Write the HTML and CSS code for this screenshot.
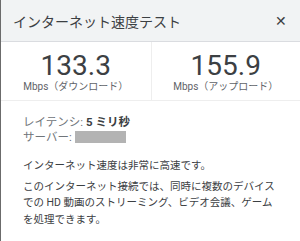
FILE: index.html
```html
<!DOCTYPE html>
<html lang="ja">
<head>
    <meta charset="UTF-8">
    <title>インターネット速度テスト</title>
    <link rel="stylesheet" href="styles.css">
</head>
<body>
    <div class="panel">
        <div class="header">
            <span class="title">インターネット速度テスト</span>
            <span class="close">&#x2715;</span>
        </div>

        <div class="stats">
            <div class="stat">
                <div class="value">133.3</div>
                <div class="unit">Mbps（ダウンロード）</div>
            </div>
            <div class="stat">
                <div class="value">155.9</div>
                <div class="unit">Mbps（アップロード）</div>
            </div>
        </div>

        <div class="details">
            <div class="meta">
                <div>レイテンシ: <b>5 ミリ秒</b></div>
                <div>サーバー: <span class="hidden-box"></span></div>
            </div>
            <p>インターネット速度は非常に高速です。</p>
            <p>このインターネット接続では、同時に複数のデバイスでの HD 動画のストリーミング、ビデオ会議、ゲームを処理できます。</p>
        </div>
    </div>
</body>
</html>
```

FILE: styles.css
```css
body {
    margin: 0;
    font-family: Roboto, "Noto Sans CJK JP", sans-serif;
    background-color: white;
    color: #3c4043;
}

.panel {
    border-left: 1px solid #6b6b6b;
    height: 241px;
    box-sizing: border-box;
}

.header {
    display: flex;
    justify-content: space-between;
    align-items: center;
    height: 42px;
    padding: 0 13px 0 12px;
    background-color: #f1f3f4;
    border-bottom: 1px solid #dadce0;
    box-sizing: border-box;
}

.title {
    font-size: 14px;
    color: #3c4043;
}

.close {
    font-size: 14px;
    font-weight: 300;
    color: #3c4043;
}

.stats {
    display: grid;
    grid-template-columns: 1fr 1fr;
    border-bottom: 1px solid #eeeeee;
}

.stat {
    text-align: center;
    padding: 8px 0 7px;
}

.stat + .stat {
    border-left: 1px solid #eeeeee;
}

.value {
    font-size: 28px;
    line-height: 31px;
    color: #3c4043;
}

.unit {
    font-size: 10px;
    line-height: 12px;
    color: #5f6368;
}

.details {
    padding: 14px 22px 0;
    font-size: 11px;
}

.meta {
    color: #70757a;
    font-size: 11.5px;
    line-height: 15px;
    margin-bottom: 13px;
}

.meta b {
    color: #3c4043;
}

.hidden-box {
    display: inline-block;
    width: 51px;
    height: 12px;
    vertical-align: -2px;
    background-color: #b3b3b3;
}

.details p {
    margin: 0 0 4px;
    line-height: 16.5px;
    font-size: 10.5px;
}
```
